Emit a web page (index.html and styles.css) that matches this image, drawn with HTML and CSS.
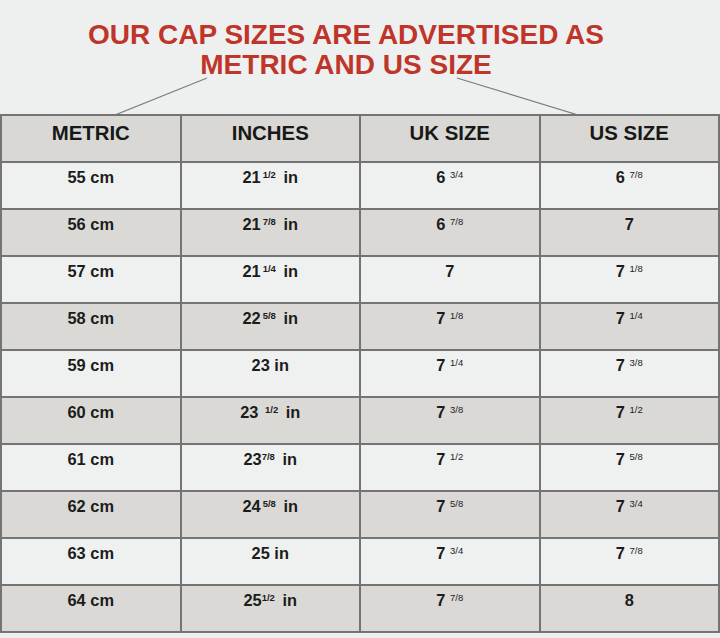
FILE: index.html
```html
<!DOCTYPE html>
<html lang="en">
<head>
<meta charset="utf-8">
<title>Cap sizes</title>
<link rel="stylesheet" href="styles.css">
</head>
<body>
<div class="page">
  <header class="banner">
    <h1 class="title">OUR CAP SIZES ARE ADVERTISED AS<br>METRIC AND US SIZE</h1>
    <svg class="pointers" width="720" height="114" viewBox="0 0 720 114">
      <line x1="207" y1="78" x2="115" y2="115" />
      <line x1="457" y1="78" x2="578" y2="115" />
    </svg>
  </header>
  <div class="chart">
    <div class="cell head">METRIC</div>
    <div class="cell head">INCHES</div>
    <div class="cell head">UK SIZE</div>
    <div class="cell head">US SIZE</div>

    <div class="cell light">55 cm</div>
    <div class="cell light">21<sup class="fb">1/2</sup> in</div>
    <div class="cell light">6 <sup>3/4</sup></div>
    <div class="cell light">6 <sup>7/8</sup></div>

    <div class="cell dark">56 cm</div>
    <div class="cell dark">21<sup class="fb">7/8</sup> in</div>
    <div class="cell dark">6 <sup>7/8</sup></div>
    <div class="cell dark">7</div>

    <div class="cell light">57 cm</div>
    <div class="cell light">21<sup class="fb">1/4</sup> in</div>
    <div class="cell light">7</div>
    <div class="cell light">7 <sup>1/8</sup></div>

    <div class="cell dark">58 cm</div>
    <div class="cell dark">22<sup class="fb">5/8</sup> in</div>
    <div class="cell dark">7 <sup>1/8</sup></div>
    <div class="cell dark">7 <sup>1/4</sup></div>

    <div class="cell light">59 cm</div>
    <div class="cell light">23 in</div>
    <div class="cell light">7 <sup>1/4</sup></div>
    <div class="cell light">7 <sup>3/8</sup></div>

    <div class="cell dark">60 cm</div>
    <div class="cell dark">23 <sup class="fb">1/2</sup> in</div>
    <div class="cell dark">7 <sup>3/8</sup></div>
    <div class="cell dark">7 <sup>1/2</sup></div>

    <div class="cell light">61 cm</div>
    <div class="cell light">23<sup class="fb tight">7/8</sup> in</div>
    <div class="cell light">7 <sup>1/2</sup></div>
    <div class="cell light">7 <sup>5/8</sup></div>

    <div class="cell dark">62 cm</div>
    <div class="cell dark">24<sup class="fb">5/8</sup> in</div>
    <div class="cell dark">7 <sup>5/8</sup></div>
    <div class="cell dark">7 <sup>3/4</sup></div>

    <div class="cell light">63 cm</div>
    <div class="cell light">25 in</div>
    <div class="cell light">7 <sup>3/4</sup></div>
    <div class="cell light">7 <sup>7/8</sup></div>

    <div class="cell dark">64 cm</div>
    <div class="cell dark">25<sup class="fb tight">1/2</sup> in</div>
    <div class="cell dark">7 <sup>7/8</sup></div>
    <div class="cell dark">8</div>
  </div>
</div>
</body>
</html>
```

FILE: styles.css
```css
html, body {
  margin: 0;
  padding: 0;
  background: #eef0ef;
}

.page {
  width: 720px;
  font-family: "Liberation Sans", Arial, sans-serif;
  color: #1c1c1c;
}

.banner {
  position: relative;
  height: 114px;
}

.title {
  margin: 0;
  padding: 20px 28px 0 0;
  font-size: 28px;
  line-height: 30px;
  font-weight: 700;
  text-align: center;
  color: #c0352a;
}

.pointers {
  position: absolute;
  left: 0;
  top: 0;
}

.pointers line {
  stroke: #7d7d7d;
  stroke-width: 1.2;
}

.chart {
  display: grid;
  grid-template-columns: repeat(4, 1fr);
  grid-auto-rows: 45px;
  gap: 2px;
  background: #747474;
  border: 2px solid #747474;
  width: 716px;
}

.cell {
  text-align: center;
  font-weight: 700;
  font-size: 16.4px;
  line-height: 20px;
  padding-top: 4px;
  white-space: nowrap;
}

.head {
  background: #d9d8d4;
  font-size: 20.4px;
  line-height: 24px;
  padding-top: 5px;
  color: #181818;
}

.light {
  background: #eef1f0;
}

.dark {
  background: #dbd9d6;
}

sup {
  font-size: 9.5px;
  font-weight: 400;
  vertical-align: 5px;
  line-height: 0;
}

sup.fb {
  font-weight: 700;
  margin-left: 2px;
  margin-right: 3px;
}

sup.tight {
  margin-left: 0;
}
```
